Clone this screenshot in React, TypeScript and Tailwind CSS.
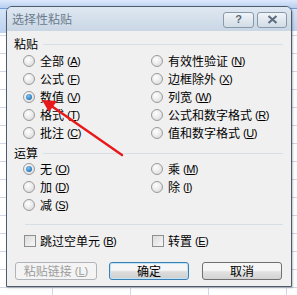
import React from 'react';

type Opt = { label: string; key: string; checked?: boolean };

const pasteLeft: Opt[] = [
  { label: '全部', key: 'A' },
  { label: '公式', key: 'F' },
  { label: '数值', key: 'V', checked: true },
  { label: '格式', key: 'T' },
  { label: '批注', key: 'C' },
];
const pasteRight: Opt[] = [
  { label: '有效性验证', key: 'N' },
  { label: '边框除外', key: 'X' },
  { label: '列宽', key: 'W' },
  { label: '公式和数字格式', key: 'R' },
  { label: '值和数字格式', key: 'U' },
];
const opLeft: Opt[] = [
  { label: '无', key: 'O', checked: true },
  { label: '加', key: 'D' },
  { label: '减', key: 'S' },
];
const opRight: Opt[] = [
  { label: '乘', key: 'M' },
  { label: '除', key: 'I' },
];

const Key = ({ k }: { k: string }) => (
  <span className="ml-[3px] text-[11px] font-['Liberation_Sans',sans-serif] tracking-[-0.5px]">
    (<span className="underline underline-offset-1">{k}</span>)
  </span>
);

const Radio = ({ label, key: _k, checked, k }: Opt & { k: string }) => (
  <div className="flex h-[18px] items-center">
    <span className="flex h-[12px] w-[12px] items-center justify-center rounded-full border border-[#9a9a9a] bg-[radial-gradient(circle_at_40%_35%,#ffffff,#d6d6d6)]">
      {checked && (
        <span className="h-[6px] w-[6px] rounded-full bg-[radial-gradient(circle_at_40%_35%,#7cc4f5,#0d5aa0)]" />
      )}
    </span>
    <span className="ml-[5px] text-[12px] leading-none">{label}</span>
    <Key k={k} />
  </div>
);

const Check = ({ label, k }: { label: string; k: string }) => (
  <div className="flex h-[18px] items-center">
    <span className="h-[12px] w-[12px] border border-[#8e8f8f] bg-[linear-gradient(135deg,#dcdcdc,#f7f7f7)]" />
    <span className="ml-[4px] text-[12px] leading-none">{label}</span>
    <Key k={k} />
  </div>
);

const Section = ({ title }: { title: string }) => (
  <div className="flex h-[14px] items-center pl-[7px] pr-[8px]">
    <span className="text-[12px] leading-none">{title}</span>
    <div className="ml-[5px] h-px flex-1 bg-[#d5dfe5]" />
  </div>
);

const Cols = ({ left, right }: { left: Opt[]; right: Opt[] }) => (
  <div className="grid grid-cols-[128px_1fr] pl-[16px]">
    <div className="flex flex-col">
      {left.map((o) => (
        <Radio key={o.key} {...o} k={o.key} />
      ))}
    </div>
    <div className="flex flex-col">
      {right.map((o) => (
        <Radio key={o.key} {...o} k={o.key} />
      ))}
    </div>
  </div>
);

export default function App() {
  return (
    <div className="relative h-[295px] w-[297px] overflow-hidden bg-white font-['Noto_Sans_CJK_SC',sans-serif] text-black">
      {/* spreadsheet behind */}
      <div className="absolute inset-0 bg-[repeating-linear-gradient(to_bottom,transparent_0px,transparent_17px,#d0d7e5_17px,#d0d7e5_18px)]" />
      <div className="absolute inset-0 bg-[repeating-linear-gradient(to_right,transparent_0px,transparent_52px,#d0d7e5_52px,#d0d7e5_53px,transparent_53px,transparent_78px)]" />
      <div className="absolute left-0 right-0 top-0 h-[9px] border-b border-[#6f9bd8] bg-[linear-gradient(#dde9fb,#b7cff2)]" />
      <div className="absolute right-0 top-[9px] h-[22px] w-[6px] bg-[linear-gradient(#d5e4f8,#bcd2f0)]" />
      <div className="absolute left-0 top-[9px] h-[24px] w-[6px] bg-[linear-gradient(#d5e4f8,#bcd2f0)]" />

      {/* dialog */}
      <div className="absolute left-[6px] top-[6px] flex h-[281px] w-[286px] flex-col overflow-hidden rounded-t-[6px] border border-[#4f5d6b] shadow-[1px_1px_2px_rgba(0,0,0,0.25)]">
        <div className="flex h-[24px] items-center bg-[linear-gradient(#dfe8f2,#c9d6e4)] pl-[5px] pr-[4px]">
          <span className="text-[12px] leading-none text-[#6a7b8c]">选择性粘贴</span>
          <div className="ml-auto flex gap-[3px] pt-[1px]">
            <span className="flex h-[16px] w-[31px] items-center justify-center rounded-[3px] border border-[#8899aa] bg-[linear-gradient(#f0f4f8,#d2dce6)] text-[11px] font-bold leading-none text-[#58687a] font-['Liberation_Sans',sans-serif]">
              ?
            </span>
            <span className="flex h-[16px] w-[30px] items-center justify-center rounded-[3px] border border-[#8899aa] bg-[linear-gradient(#f0f4f8,#d2dce6)]">
              <svg width="11" height="9" viewBox="0 0 11 9">
                <path d="M1.5 1l8 7M9.5 1l-8 7" stroke="#5f6f80" strokeWidth="2.2" />
              </svg>
            </span>
          </div>
        </div>

        <div className="flex flex-1 flex-col bg-[#f0f0f0]">
          <div className="mt-[6px]">
            <Section title="粘贴" />
          </div>
          <div className="mt-[1px]">
            <Cols left={pasteLeft} right={pasteRight} />
          </div>
          <div className="mt-[4px]">
            <Section title="运算" />
          </div>
          <Cols left={opLeft} right={opRight} />
          <div className="ml-[18px] mr-[8px] mt-[10px] h-px bg-[#d5dfe5]" />
          <div className="mt-[7px] grid grid-cols-[128px_1fr] pl-[17px]">
            <Check label="跳过空单元" k="B" />
            <Check label="转置" k="E" />
          </div>
          <div className="mt-[12px] flex pl-[8px]">
            <button className="flex h-[18px] w-[82px] items-center justify-center rounded-[3px] border border-[#b0b4b8] bg-[#f4f4f4] text-[12px] leading-none text-[#9c9c9c]">
              粘贴链接
              <span className="ml-[3px] text-[11px] font-['Liberation_Sans',sans-serif]">
                (<span className="underline">L</span>)
              </span>
            </button>
            <button className="ml-[12px] flex h-[18px] w-[80px] items-center justify-center rounded-[3px] border border-[#3c7fb1] bg-[linear-gradient(#f6f6f6_45%,#dcdcdc_55%,#cfcfcf)] text-[12px] leading-none shadow-[inset_0_0_0_1px_#bfe4f8]">
              确定
            </button>
            <button className="ml-[13px] flex h-[18px] w-[80px] items-center justify-center rounded-[3px] border border-[#707070] bg-[linear-gradient(#f6f6f6_45%,#e2e2e2_55%,#d3d3d3)] text-[12px] leading-none">
              取消
            </button>
          </div>
        </div>
      </div>

      {/* red arrow */}
      <svg className="absolute left-0 top-0" width="297" height="295" viewBox="0 0 297 295">
        <line x1="122" y1="155" x2="50" y2="105" stroke="#e8191b" strokeWidth="2.4" strokeLinecap="round" />
        <polygon points="42,100 57,101 49,112" fill="#e8191b" />
      </svg>
    </div>
  );
}
